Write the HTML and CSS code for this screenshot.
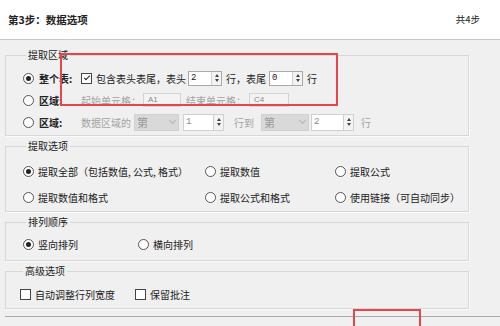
FILE: index.html
```html
<!DOCTYPE html>
<html lang="zh">
<head>
  <meta charset="UTF-8">
  <title>数据选项</title>
  <link rel="stylesheet" href="styles.css">
</head>
<body>
<div class="header">
  <span class="title">第3步：数据选项</span>
  <span class="steps">共4步</span>
</div>

<div class="main">
  <fieldset class="group g-area">
    <legend>提取区域</legend>
    <div class="row">
      <span class="radio on"></span><span class="rlabel">整个表:</span>
      <span class="check on"></span><span class="t-head">包含表头表尾，表头</span>
      <span class="spin s-head"><span class="val">2</span><span class="arrows"><i class="up"></i><i class="down"></i></span></span>
      <span class="t-tail">行，表尾</span>
      <span class="spin s-tail"><span class="val">0</span><span class="arrows"><i class="up"></i><i class="down"></i></span></span>
      <span class="t-row">行</span>
    </div>
    <div class="row">
      <span class="radio"></span><span class="rlabel">区域:</span>
      <span class="dim">起始单元格：</span>
      <span class="cell c-start">A1</span>
      <span class="dim c-endlabel">结束单元格：</span>
      <span class="cell c-end">C4</span>
    </div>
    <div class="row">
      <span class="radio"></span><span class="rlabel">区域:</span>
      <span class="dim">数据区域的</span>
      <span class="select sel-1">第<span class="chev"></span></span>
      <span class="spin dis sp-1"><span class="val">1</span><span class="arrows"><i class="up"></i><i class="down"></i></span></span>
      <span class="dim t-to">行到</span>
      <span class="select sel-2">第<span class="chev"></span></span>
      <span class="spin dis sp-2"><span class="val">2</span><span class="arrows"><i class="up"></i><i class="down"></i></span></span>
      <span class="dim t-end">行</span>
    </div>
  </fieldset>

  <fieldset class="group g-opts">
    <legend>提取选项</legend>
    <div class="opts">
      <label class="opt"><span class="radio on"></span>提取全部（包括数值, 公式, 格式）</label>
      <label class="opt"><span class="radio"></span>提取数值</label>
      <label class="opt"><span class="radio"></span>提取公式</label>
      <label class="opt"><span class="radio"></span>提取数值和格式</label>
      <label class="opt"><span class="radio"></span>提取公式和格式</label>
      <label class="opt"><span class="radio"></span>使用链接（可自动同步）</label>
    </div>
  </fieldset>

  <fieldset class="group g-order">
    <legend>排列顺序</legend>
    <div class="pair">
      <label class="opt"><span class="radio on"></span>竖向排列</label>
      <label class="opt"><span class="radio"></span>横向排列</label>
    </div>
  </fieldset>

  <fieldset class="group g-adv">
    <legend>高级选项</legend>
    <div class="pair">
      <label class="opt"><span class="check"></span>自动调整行列宽度</label>
      <label class="opt"><span class="check"></span>保留批注</label>
    </div>
  </fieldset>

  <div class="footer"></div>
</div>

<div class="mark mark-top"></div>
<div class="mark mark-bottom"></div>
</body>
</html>
```

FILE: styles.css
```css
body { margin: 0; font-family: "Noto Sans CJK SC", "Noto Sans", sans-serif; font-size: 10px; color: #222; background: #f0f0f0; height: 326px; overflow: hidden; }

.header { height: 40px; background: #fff; border-bottom: 1px solid #c9c9c9; display: flex; align-items: center; justify-content: space-between; padding: 0 20px 0 8px; margin-top: -1px; }
.title { font-weight: bold; font-size: 10.5px; }
.steps { font-size: 9.5px; }

.main { padding: 8px 0 0 5px; }

.group { width: 464px; box-sizing: border-box; margin: 3px 0 0; padding: 0; border: 1px solid #d7d7d7; box-shadow: 1px 1px 0 #fbfbfb; min-width: 0; }
.group:first-child { margin-top: 0; }
.group legend { margin-left: 3px; padding: 0 2px; line-height: 14px; }

.g-area { padding: 5px 0 2px 17px; }
.g-opts { padding: 5px 0 1px 17px; }
.g-order { padding: 4px 0 5px 17px; }
.g-adv { padding: 5px 0 3px 14px; }

.row { height: 22px; display: flex; align-items: center; white-space: nowrap; }
.rlabel { width: 42px; margin-left: 5px; font-weight: bold; }

.radio { width: 9px; height: 9px; border: 1px solid #555; border-radius: 50%; background: #fff; display: inline-flex; align-items: center; justify-content: center; flex-shrink: 0; }
.radio.on::after { content: ""; width: 5px; height: 5px; border-radius: 50%; background: #222; }

.check { width: 9px; height: 9px; border: 1px solid #444; background: #fff; display: inline-flex; align-items: center; justify-content: center; flex-shrink: 0; }
.check.on::after { content: ""; width: 5px; height: 2px; border-left: 1.2px solid #222; border-bottom: 1.2px solid #222; transform: rotate(-45deg) translate(1px, -1px); }

.t-head { margin-left: 4px; width: 92px; }
.t-tail { margin-left: 4px; width: 43px; }
.t-row { margin-left: 4px; }

.spin { height: 15px; box-sizing: border-box; border: 1px solid #a9a9a9; background: #fff; display: inline-flex; align-items: stretch; }
.spin .val { flex: 1; padding-left: 2px; font-size: 9px; line-height: 13px; font-family: "Liberation Mono", monospace; }
.spin .arrows { width: 9px; border-left: 1px solid #d0d0d0; background: #f3f3f3; display: flex; flex-direction: column; align-items: center; justify-content: center; gap: 2px; }
.arrows i { width: 0; height: 0; border-left: 2.5px solid transparent; border-right: 2.5px solid transparent; }
.arrows .up { border-bottom: 3px solid #444; }
.arrows .down { border-top: 3px solid #444; }
.s-head { width: 34px; margin-left: 0; }
.s-tail { width: 34px; }

.dim { color: #a3a3a3; }
.cell { height: 14px; box-sizing: border-box; border: 1px solid #d4d4d4; background: #f3f3f3; color: #8a8a8a; font-family: "Liberation Sans", sans-serif; font-size: 8px; line-height: 12px; padding-left: 4px; }
.c-start { width: 38px; margin-left: 2px; }
.c-endlabel { margin-left: 5px; }
.c-end { width: 40px; margin-left: 3px; }

.select { height: 17px; box-sizing: border-box; background: #d9d9d9; border: 1px solid #d0d0d0; color: #9a9a9a; display: inline-flex; align-items: center; justify-content: space-between; padding: 0 3px 0 2px; font-size: 11px; }
.chev { width: 4px; height: 4px; border-right: 1px solid #b3b3b3; border-bottom: 1px solid #b3b3b3; transform: rotate(45deg); margin-top: -3px; }
.sel-1 { width: 45px; margin-left: 3px; }
.sel-2 { width: 48px; margin-left: 7px; }
.spin.dis { height: 17px; border-color: #d0d0d0; }
.spin.dis .val { color: #8a8a8a; line-height: 15px; }
.sp-1 { width: 41px; margin-left: 4px; }
.sp-2 { width: 43px; margin-left: 2px; }
.t-to { margin-left: 10px; }
.t-end { margin-left: 7px; }

.opts { display: grid; grid-template-columns: 182px 130px 1fr; grid-auto-rows: 26px; align-items: center; }
.pair { display: grid; grid-template-columns: 115px 1fr; height: 22px; align-items: center; }
.opt { display: flex; align-items: center; gap: 4px; white-space: nowrap; }

.footer { margin-top: 7px; border-top: 1px solid #a9a9a9; height: 10px; }

.mark { position: absolute; border: 2px solid #e5464c; box-sizing: border-box; }
.mark-top { left: 60px; top: 53px; width: 278px; height: 53px; }
.mark-bottom { left: 353px; top: 309px; width: 68px; height: 30px; }
```
